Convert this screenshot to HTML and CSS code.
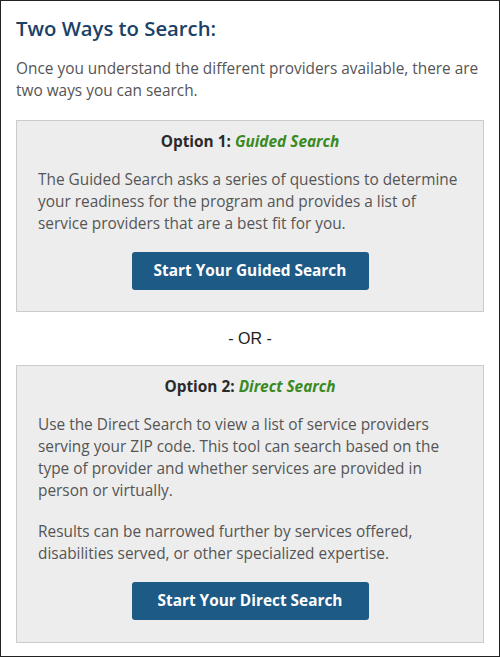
FILE: index.html
```html
<!DOCTYPE html>
<html lang="en">
<head>
    <meta charset="UTF-8">
    <meta name="viewport" content="width=device-width, initial-scale=1.0">
    <title>Two Ways to Search</title>
    <link rel="stylesheet" href="styles.css">
</head>
<body>
    <main class="page">
        <h2 class="page-title">Two Ways to Search:</h2>
        <p class="intro">Once you understand the different providers available, there are two ways you can search.</p>

        <section class="option-box">
            <h3 class="option-title">Option 1: <em>Guided Search</em></h3>
            <p>The Guided Search asks a series of questions to determine your readiness for the program and provides a list of service providers that are a best fit for you.</p>
            <div class="btn-row">
                <a href="#" class="btn">Start Your Guided Search</a>
            </div>
        </section>

        <div class="or-divider">- OR -</div>

        <section class="option-box">
            <h3 class="option-title">Option 2: <em>Direct Search</em></h3>
            <p>Use the Direct Search to view a list of service providers serving your ZIP code. This tool can search based on the type of provider and whether services are provided in person or virtually.</p>
            <p>Results can be narrowed further by services offered, disabilities served, or other specialized expertise.</p>
            <div class="btn-row">
                <a href="#" class="btn">Start Your Direct Search</a>
            </div>
        </section>
    </main>
</body>
</html>
```

FILE: styles.css
```css
*{
    margin:0;
    padding:0;
    box-sizing: border-box;
}
body{
    font-family: "Open Sans", sans-serif;
    color: #222;
    background: #fff;
}
a{
    text-decoration: none;
}
.page{
    width: 500px;
    height: 657px;
    border: 1px solid #222;
    padding: 0 15px;
}
.page-title{
    font-size: 20.3px;
    font-weight: 600;
    color: #1b4166;
    margin-top: 13px;
    line-height: 28px;
}
p{
    font-size: 15.4px;
    line-height: 22px;
    color: #555;
}
.intro{
    margin-top: 16px;
}
.option-box{
    background-color: #ededed;
    border: 1px solid #ccc;
    padding: 9px 21px 21px;
    margin-top: 18px;
}
.option-title{
    text-align: center;
    font-size: 15.4px;
    font-weight: 700;
    color: #2a2a2a;
    line-height: 24px;
    margin-bottom: 15px;
}
.option-title em{
    color: #3a8a22;
}
.option-box p{
    margin-bottom: 17px;
}
.option-box p + p{
    padding-top: 2px;
}
.btn-row{
    display: flex;
    justify-content: center;
}
.btn{
    display: inline-block;
    width: 237px;
    height: 38px;
    line-height: 38px;
    text-align: center;
    background-color: #1d5a86;
    color: #fff;
    font-size: 15.4px;
    font-weight: 700;
    border-radius: 3px;
}
.or-divider{
    font-family: "Liberation Sans", Arial, sans-serif;
    font-size: 16px;
    color: #222;
    text-align: center;
    padding-top: 14px;
    line-height: 26px;
}
.or-divider + .option-box{
    margin-top: 13px;
    padding-bottom: 22px;
}
```
